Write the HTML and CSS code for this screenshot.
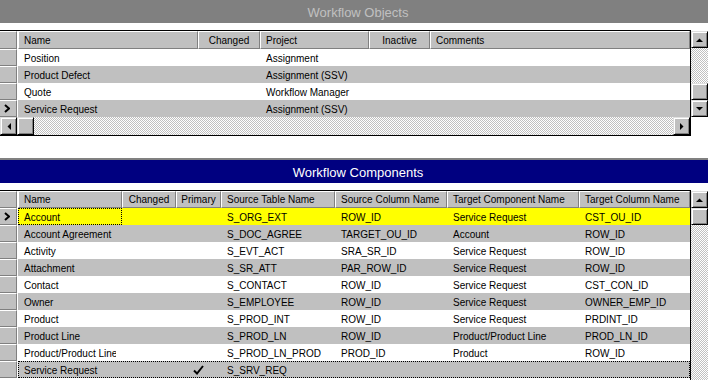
FILE: index.html
```html
<!DOCTYPE html>
<html lang="en">
<head>
  <meta charset="UTF-8">
  <title>Workflow Objects</title>
  <link rel="stylesheet" href="styles.css">
</head>
<body>
  <!-- Workflow Objects -->
  <div class="caption caption-inactive">Workflow Objects</div>
  <div class="applet applet-objects">
    <div class="table">
      <div class="row head head-tall">
        <div class="sel"></div>
        <div class="cells cols-obj">
          <div class="hcell">Name</div>
          <div class="hcell center">Changed</div>
          <div class="hcell">Project</div>
          <div class="hcell center">Inactive</div>
          <div class="hcell">Comments</div>
        </div>
      </div>
      <div class="row">
        <div class="sel"></div>
        <div class="cells cols-obj">
          <div class="cell">Position</div><div class="cell"></div><div class="cell">Assignment</div><div class="cell"></div><div class="cell"></div>
        </div>
      </div>
      <div class="row alt">
        <div class="sel"></div>
        <div class="cells cols-obj">
          <div class="cell">Product Defect</div><div class="cell"></div><div class="cell">Assignment (SSV)</div><div class="cell"></div><div class="cell"></div>
        </div>
      </div>
      <div class="row">
        <div class="sel"></div>
        <div class="cells cols-obj">
          <div class="cell">Quote</div><div class="cell"></div><div class="cell">Workflow Manager</div><div class="cell"></div><div class="cell"></div>
        </div>
      </div>
      <div class="row alt">
        <div class="sel"><svg width="6" height="9" viewBox="0 0 6 9"><polyline points="1,1 5,4.5 1,8" fill="none" stroke="#000" stroke-width="2"/></svg></div>
        <div class="cells cols-obj">
          <div class="cell">Service Request</div><div class="cell"></div><div class="cell">Assignment (SSV)</div><div class="cell"></div><div class="cell"></div>
        </div>
      </div>
      <div class="hscroll">
        <div class="btn"><svg width="4" height="7" viewBox="0 0 4 7"><polygon points="4,0 4,7 0.5,3.5" fill="#000"/></svg></div>
        <div class="btn"></div>
        <div class="track"></div>
        <div class="btn"><svg width="4" height="7" viewBox="0 0 4 7"><polygon points="0,0 0,7 3.5,3.5" fill="#000"/></svg></div>
      </div>
    </div>
    <div class="vscroll vscroll-short">
      <div class="btn"><svg width="7" height="4" viewBox="0 0 7 4"><polygon points="0,4 7,4 3.5,0.5" fill="#000"/></svg></div>
      <div class="track track-upper"></div>
      <div class="btn"></div>
      <div class="btn"><svg width="7" height="4" viewBox="0 0 7 4"><polygon points="0,0 7,0 3.5,3.5" fill="#000"/></svg></div>
    </div>
  </div>

  <!-- Workflow Components -->
  <div class="caption caption-active">Workflow Components</div>
  <div class="applet applet-components">
    <div class="table">
      <div class="row head">
        <div class="sel"></div>
        <div class="cells cols-comp">
          <div class="hcell">Name</div>
          <div class="hcell center">Changed</div>
          <div class="hcell center">Primary</div>
          <div class="hcell">Source Table Name</div>
          <div class="hcell">Source Column Name</div>
          <div class="hcell">Target Component Name</div>
          <div class="hcell">Target Column Name</div>
        </div>
      </div>
      <div class="row selected">
        <div class="sel"><svg width="6" height="9" viewBox="0 0 6 9"><polyline points="1,1 5,4.5 1,8" fill="none" stroke="#000" stroke-width="2"/></svg></div>
        <div class="cells cols-comp">
          <div class="cell focus">Account</div><div class="cell"></div><div class="cell"></div><div class="cell">S_ORG_EXT</div><div class="cell">ROW_ID</div><div class="cell">Service Request</div><div class="cell">CST_OU_ID</div>
        </div>
      </div>
      <div class="row alt">
        <div class="sel"></div>
        <div class="cells cols-comp">
          <div class="cell">Account Agreement</div><div class="cell"></div><div class="cell"></div><div class="cell">S_DOC_AGREE</div><div class="cell">TARGET_OU_ID</div><div class="cell">Account</div><div class="cell">ROW_ID</div>
        </div>
      </div>
      <div class="row">
        <div class="sel"></div>
        <div class="cells cols-comp">
          <div class="cell">Activity</div><div class="cell"></div><div class="cell"></div><div class="cell">S_EVT_ACT</div><div class="cell">SRA_SR_ID</div><div class="cell">Service Request</div><div class="cell">ROW_ID</div>
        </div>
      </div>
      <div class="row alt">
        <div class="sel"></div>
        <div class="cells cols-comp">
          <div class="cell">Attachment</div><div class="cell"></div><div class="cell"></div><div class="cell">S_SR_ATT</div><div class="cell">PAR_ROW_ID</div><div class="cell">Service Request</div><div class="cell">ROW_ID</div>
        </div>
      </div>
      <div class="row">
        <div class="sel"></div>
        <div class="cells cols-comp">
          <div class="cell">Contact</div><div class="cell"></div><div class="cell"></div><div class="cell">S_CONTACT</div><div class="cell">ROW_ID</div><div class="cell">Service Request</div><div class="cell">CST_CON_ID</div>
        </div>
      </div>
      <div class="row alt">
        <div class="sel"></div>
        <div class="cells cols-comp">
          <div class="cell">Owner</div><div class="cell"></div><div class="cell"></div><div class="cell">S_EMPLOYEE</div><div class="cell">ROW_ID</div><div class="cell">Service Request</div><div class="cell">OWNER_EMP_ID</div>
        </div>
      </div>
      <div class="row">
        <div class="sel"></div>
        <div class="cells cols-comp">
          <div class="cell">Product</div><div class="cell"></div><div class="cell"></div><div class="cell">S_PROD_INT</div><div class="cell">ROW_ID</div><div class="cell">Service Request</div><div class="cell">PRDINT_ID</div>
        </div>
      </div>
      <div class="row alt">
        <div class="sel"></div>
        <div class="cells cols-comp">
          <div class="cell">Product Line</div><div class="cell"></div><div class="cell"></div><div class="cell">S_PROD_LN</div><div class="cell">ROW_ID</div><div class="cell">Product/Product Line</div><div class="cell">PROD_LN_ID</div>
        </div>
      </div>
      <div class="row">
        <div class="sel"></div>
        <div class="cells cols-comp">
          <div class="cell clip">Product/Product Line</div><div class="cell"></div><div class="cell"></div><div class="cell">S_PROD_LN_PROD</div><div class="cell">PROD_ID</div><div class="cell">Product</div><div class="cell">ROW_ID</div>
        </div>
      </div>
      <div class="row alt row-focus">
        <div class="sel"></div>
        <div class="cells cols-comp">
          <div class="cell">Service Request</div><div class="cell"></div>
          <div class="cell center"><svg width="11" height="10" viewBox="0 0 11 10"><polyline points="1,5.5 4,8.5 10,1" fill="none" stroke="#000" stroke-width="2"/></svg></div>
          <div class="cell">S_SRV_REQ</div><div class="cell"></div><div class="cell"></div><div class="cell"></div>
        </div>
      </div>
    </div>
    <div class="vscroll">
      <div class="btn"><svg width="7" height="4" viewBox="0 0 7 4"><polygon points="0,4 7,4 3.5,0.5" fill="#000"/></svg></div>
      <div class="btn"></div>
      <div class="track track-fill"></div>
    </div>
  </div>
</body>
</html>
```

FILE: styles.css
```css
body {
  margin: 0;
  width: 708px;
  height: 380px;
  overflow: hidden;
  background: #fff;
  font-family: 'Liberation Sans', Arial, sans-serif;
  font-size: 10px;
  color: #000;
}
.caption {
  box-sizing: border-box;
  height: 23px;
  padding: 2px 0 0 8px;
  line-height: 21px;
  text-align: center;
  font-size: 13px;
}
.caption-inactive {
  background: #808080;
  color: #c0c0c0;
}
.caption-active {
  height: 25px;
  margin-top: 22px;
  border-top: 2px solid #808080;
  background: #000080;
  color: #fff;
}
.applet {
  display: flex;
  align-items: flex-start;
  margin-top: 7px;
}
.applet-components {
  height: 190px;
}
.table {
  width: 690px;
  border-top: 1px solid #000;
  border-right: 1px solid #000;
}
.applet-objects .table {
  border-bottom: 1px solid #000;
}
.applet-components .table {
  height: 100%;
}
.row {
  display: flex;
  height: 17px;
}
.head-tall {
  height: 18px;
}
.sel {
  box-sizing: border-box;
  width: 17px;
  flex: none;
  display: flex;
  align-items: center;
  padding-left: 4px;
  background: #c0c0c0;
  border-top: 1px solid #fff;
  border-right: 1px solid #808080;
  border-bottom: 1px solid #808080;
}
.cells {
  display: grid;
  margin-left: 1px;
  flex: 1;
  background: #fff;
}
.cols-obj {
  grid-template-columns: 180px 62px 109px 61px 260px;
}
.cols-comp {
  grid-template-columns: 104px 54px 45px 114px 112px 132px 111px;
}
.alt .cells {
  background: #c0c0c0;
}
.selected .cells {
  background: #ffff00;
}
.hcell, .cell {
  box-sizing: border-box;
  padding: 2px 0 0 6px;
  white-space: nowrap;
  overflow: hidden;
  line-height: 15px;
}
.hcell {
  background: #c0c0c0;
  padding: 1px 0 0 5px;
  line-height: 14px;
  border-top: 1px solid #fff;
  border-left: 1px solid #fff;
  border-right: 1px solid #808080;
  border-bottom: 1px solid #808080;
}
.head-tall .hcell {
  padding-top: 2px;
}
.center {
  text-align: center;
  padding-left: 0;
  display: flex;
  justify-content: center;
}
.cell.center {
  align-items: center;
  padding-top: 0;
}
.clip {
  clip-path: inset(0 6px 0 0);
}
.focus {
  border: 1px dotted #000;
  padding: 1px 0 0 5px;
}
.row-focus .cells {
  outline: 1px dotted #000;
  outline-offset: -1px;
}
.btn {
  box-sizing: border-box;
  width: 17px;
  height: 17px;
  flex: none;
  display: flex;
  align-items: center;
  justify-content: center;
  background: #c0c0c0;
  border: 1px solid;
  border-color: #dfdfdf #000 #000 #dfdfdf;
  box-shadow: inset 1px 1px #fff, inset -1px -1px #808080;
}
.track {
  background: repeating-conic-gradient(#c0c0c0 0% 25%, #fff 0% 50%) 0 0 / 2px 2px;
}
.hscroll {
  display: flex;
  height: 18px;
}
.hscroll .btn {
  height: 18px;
}
.hscroll .track {
  flex: 1;
}
.vscroll {
  width: 17px;
  margin-top: 1px;
  display: flex;
  flex-direction: column;
}
.track-upper {
  height: 35px;
}
.track-fill {
  height: 155px;
}
```
